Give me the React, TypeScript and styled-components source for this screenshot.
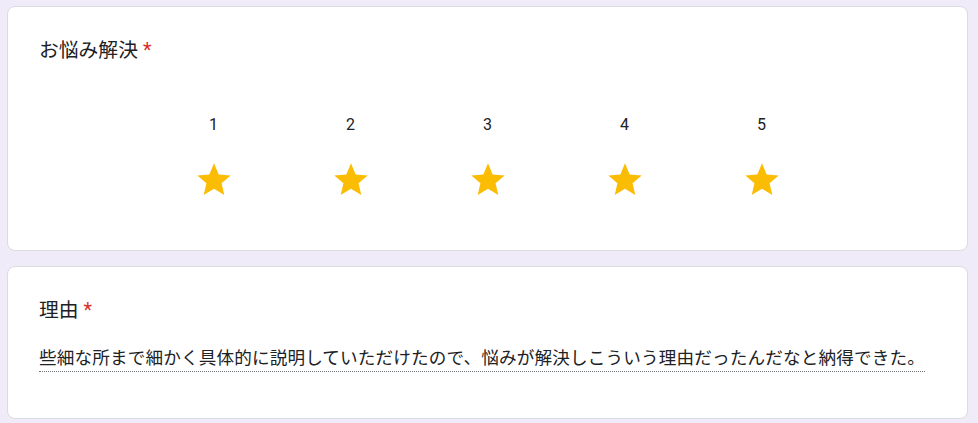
import React from "react";
import styled, { createGlobalStyle } from "styled-components";

const GlobalStyle = createGlobalStyle`
  html, body {
    margin: 0;
    padding: 0;
    background: #f0ebf8;
  }
  body {
    font-family: Roboto, "Noto Sans CJK JP", sans-serif;
    color: #202124;
  }
`;

const Page = styled.div`
  display: flex;
  flex-direction: column;
  gap: 15px;
  padding: 6px 10px 0 7px;
`;

const Card = styled.div<{ $pb: number }>`
  background: #fff;
  border: 1px solid #dadce0;
  border-radius: 8px;
  padding: 30px 31px ${({ $pb }) => $pb}px;
`;

const Title = styled.div`
  font-size: 19.8px;
  line-height: 28px;
`;

const Required = styled.span`
  color: #d93025;
  padding-left: 5px;
`;

const Scale = styled.div`
  display: flex;
  justify-content: center;
  margin-top: 48px;
`;

const Option = styled.div`
  width: 137px;
  display: flex;
  flex-direction: column;
  align-items: center;
`;

const Label = styled.div`
  font-size: 16px;
  line-height: 24px;
  height: 24px;
`;

const StarBox = styled.div`
  margin-top: 23px;
  width: 40px;
  height: 40px;
`;

const Answer = styled.div`
  margin-top: 21px;
  display: inline-block;
  font-size: 17.6px;
  line-height: 24px;
  letter-spacing: 0.15px;
  border-bottom: 1px dotted #70757a;
  padding-bottom: 1px;
`;

const Star = () => (
  <svg width="40" height="40" viewBox="0 0 24 24">
    <path
      fill="#fbbc04"
      d="M12 17.27L18.18 21l-1.64-7.03L22 9.24l-7.19-.61L12 2 9.19 8.63 2 9.24l5.46 4.73L5.82 21z"
    />
  </svg>
);

const App: React.FC = () => {
  const levels = [1, 2, 3, 4, 5];

  return (
    <>
      <GlobalStyle />
      <Page>
        <Card $pb={50}>
          <Title>
            お悩み解決<Required>*</Required>
          </Title>
          <Scale>
            {levels.map(n => (
              <Option key={n}>
                <Label>{n}</Label>
                <StarBox>
                  <Star />
                </StarBox>
              </Option>
            ))}
          </Scale>
        </Card>
        <Card $pb={46}>
          <Title>
            理由<Required>*</Required>
          </Title>
          <Answer>
            些細な所まで細かく具体的に説明していただけたので、悩みが解決しこういう理由だったんだなと納得できた。
          </Answer>
        </Card>
      </Page>
    </>
  );
};

export default App;
